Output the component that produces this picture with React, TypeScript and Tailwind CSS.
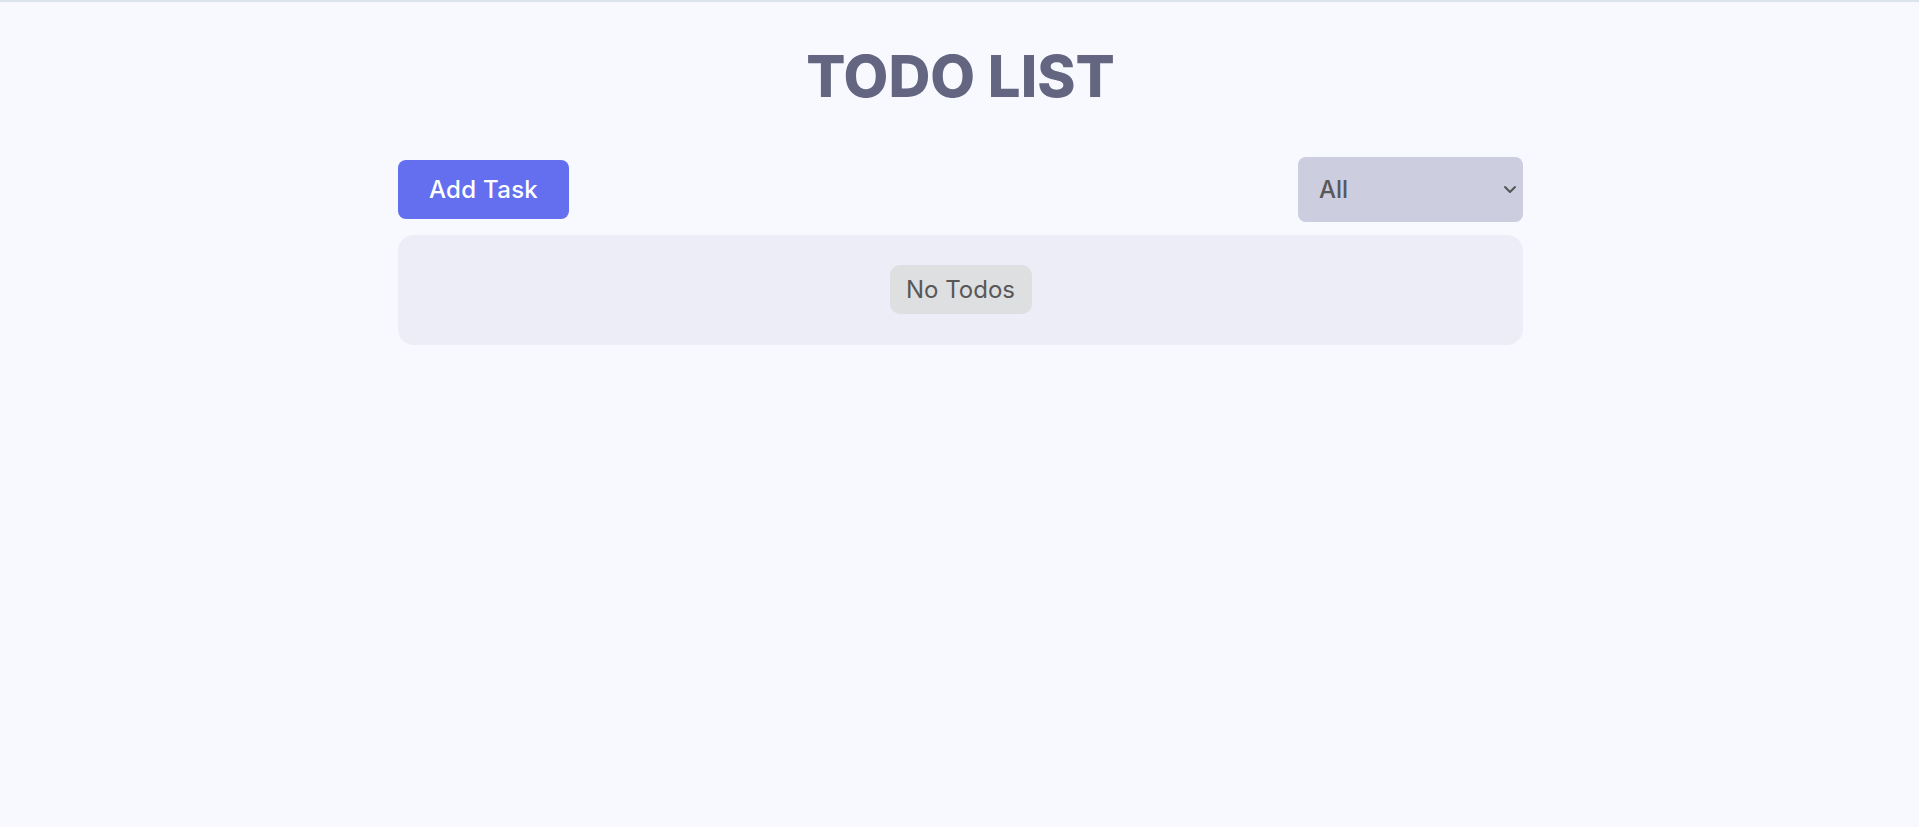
import React, { useState } from 'react';

const font = { fontFamily: 'Inter, "Noto Sans", sans-serif' };

const App: React.FC = () => {
  const [filter, setFilter] = useState('all');

  return (
    <div className="min-h-screen bg-[#f8f9ff] border-t-2 border-[#dde3ea] pl-[2px]" style={font}>
      {/* Title */}
      <h1 className="pt-[45px] text-center text-[58px] leading-none font-extrabold text-[#646681]">
        TODO LIST
      </h1>

      <div className="w-[1125px] mx-auto mt-[52px]">
        {/* Toolbar */}
        <div className="flex items-center justify-between">
          <button className="w-[171px] h-[59px] rounded-[8px] bg-[#646ff0] text-white text-[24px] font-medium tracking-[0.3px]">
            Add Task
          </button>

          <div className="relative">
            <select
              value={filter}
              onChange={(e) => setFilter(e.target.value)}
              className="appearance-none w-[225px] h-[65px] rounded-[8px] bg-[#cccdde] pl-[21px] text-[24px] font-medium text-[#585858] outline-none"
            >
              <option value="all">All</option>
              <option value="incomplete">Incomplete</option>
              <option value="complete">Completed</option>
            </select>
            <svg
              className="pointer-events-none absolute right-[6px] top-[28px]"
              width="14"
              height="9"
              viewBox="0 0 14 9"
              fill="none"
            >
              <path d="M2 2l5 5 5-5" stroke="#555" strokeWidth="2" strokeLinecap="round" strokeLinejoin="round" />
            </svg>
          </div>
        </div>

        {/* List */}
        <div className="mt-[13px] rounded-[16px] bg-[#ecedf6] pt-[30px] pb-[31px] flex justify-center">
          <p className="w-[142px] h-[49px] rounded-[10px] bg-[#dedfe1] flex items-center justify-center text-[24px] text-[#585858]">
            No Todos
          </p>
        </div>
      </div>
    </div>
  );
};

export default App;
